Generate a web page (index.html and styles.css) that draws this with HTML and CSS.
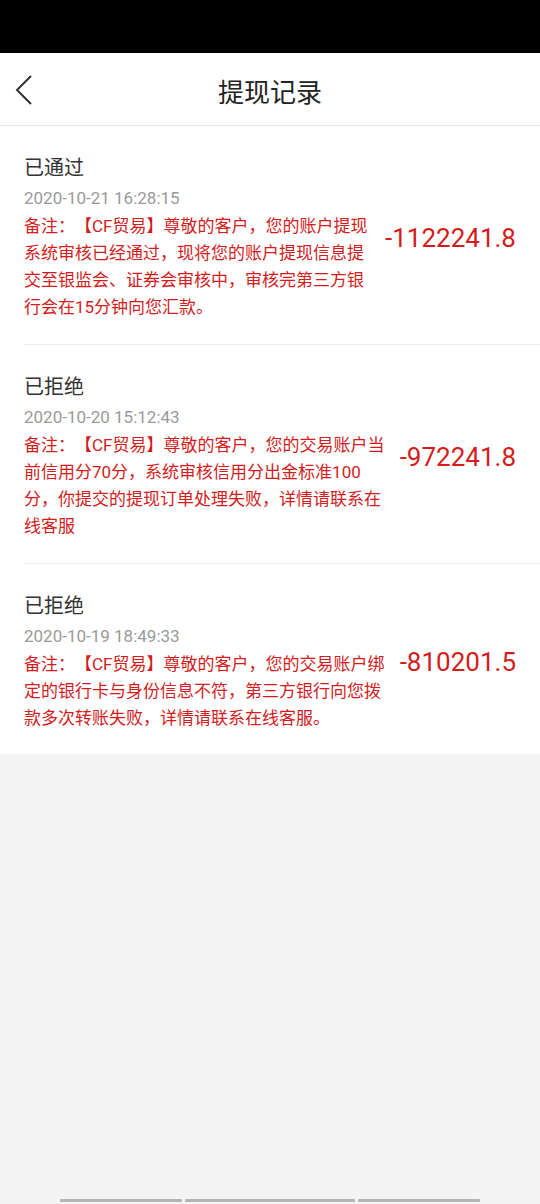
FILE: index.html
```html
<!DOCTYPE html>
<html lang="zh">
<head>
  <meta charset="UTF-8">
  <title>提现记录</title>
  <link rel="stylesheet" href="styles.css">
</head>
<body>

  <div class="status-bar"></div>

  <header class="top-bar">
    <svg class="back" width="18" height="30" viewBox="0 0 18 30">
      <polyline points="16,1 2,15 16,29" fill="none" stroke="#333" stroke-width="2"/>
    </svg>
    <h1>提现记录</h1>
  </header>

  <div class="record-list">
    <div class="record">
      <div class="record-info">
        <div class="record-status">已通过</div>
        <div class="record-time">2020-10-21 16:28:15</div>
        <div class="record-note">备注：【CF贸易】尊敬的客户，您的账户提现系统审核已经通过，现将您的账户提现信息提交至银监会、证券会审核中，审核完第三方银行会在15分钟向您汇款。</div>
      </div>
      <div class="record-amount">-1122241.8</div>
    </div>

    <div class="record">
      <div class="record-info">
        <div class="record-status">已拒绝</div>
        <div class="record-time">2020-10-20 15:12:43</div>
        <div class="record-note">备注：【CF贸易】尊敬的客户，您的交易账户当前信用分70分，系统审核信用分出金标准100分，你提交的提现订单处理失败，详情请联系在线客服</div>
      </div>
      <div class="record-amount">-972241.8</div>
    </div>

    <div class="record">
      <div class="record-info">
        <div class="record-status">已拒绝</div>
        <div class="record-time">2020-10-19 18:49:33</div>
        <div class="record-note">备注：【CF贸易】尊敬的客户，您的交易账户绑定的银行卡与身份信息不符，第三方银行向您拨款多次转账失败，详情请联系在线客服。</div>
      </div>
      <div class="record-amount">-810201.5</div>
    </div>
  </div>

  <div class="nav-hint">
    <span class="seg seg-a"></span>
    <span class="seg seg-b"></span>
    <span class="seg seg-c"></span>
  </div>

</body>
</html>
```

FILE: styles.css
```css
body {
  margin: 0;
  padding: 0;
  min-height: 1204px;
  display: flex;
  flex-direction: column;
  background-color: #f4f4f4;
  font-family: Roboto, "Noto Sans CJK SC", sans-serif;
}

.status-bar {
  height: 53px;
  background-color: #000;
}

/* barra de título */
.top-bar {
  position: relative;
  height: 72px;
  background-color: #fff;
  border-bottom: 1px solid #e6e6e6;
  display: flex;
  align-items: center;
  justify-content: center;
}

.top-bar h1 {
  margin: 0;
  font-size: 26px;
  font-weight: normal;
  color: #222;
  padding-top: 3px;
}

.back {
  position: absolute;
  left: 15px;
  top: 22px;
}

.record-list {
  background-color: #fff;
  padding-left: 24px;
}

.record {
  display: flex;
  align-items: center;
  gap: 10px;
  padding: 28px 24px 23px 0;
  border-bottom: 1px solid #ededed;
}

.record:last-child {
  border-bottom: none;
  padding-bottom: 22px;
}

.record-info {
  flex: 1;
  min-width: 0;
}

.record-status {
  font-size: 20px;
  line-height: 28px;
  color: #333;
}

.record-time {
  margin-top: 4px;
  font-size: 17px;
  line-height: 24px;
  color: #9a9a9a;
}

.record-note {
  margin-top: 3px;
  font-size: 17px;
  line-height: 27px;
  color: #d41c1c;
  text-spacing-trim: space-all; /* mantém ：【 com largura cheia */
}

.record-amount {
  font-size: 26px;
  color: #d41c1c;
  white-space: nowrap;
}

.nav-hint {
  margin-top: auto;
  height: 5px;
  display: flex;
  gap: 3px;
  padding-left: 60px;
}

.seg {
  height: 3px;
  background-color: #b4b4b4;
  border-radius: 1px;
}

.seg-a { width: 122px; }
.seg-b { width: 170px; }
.seg-c { width: 122px; }
```
